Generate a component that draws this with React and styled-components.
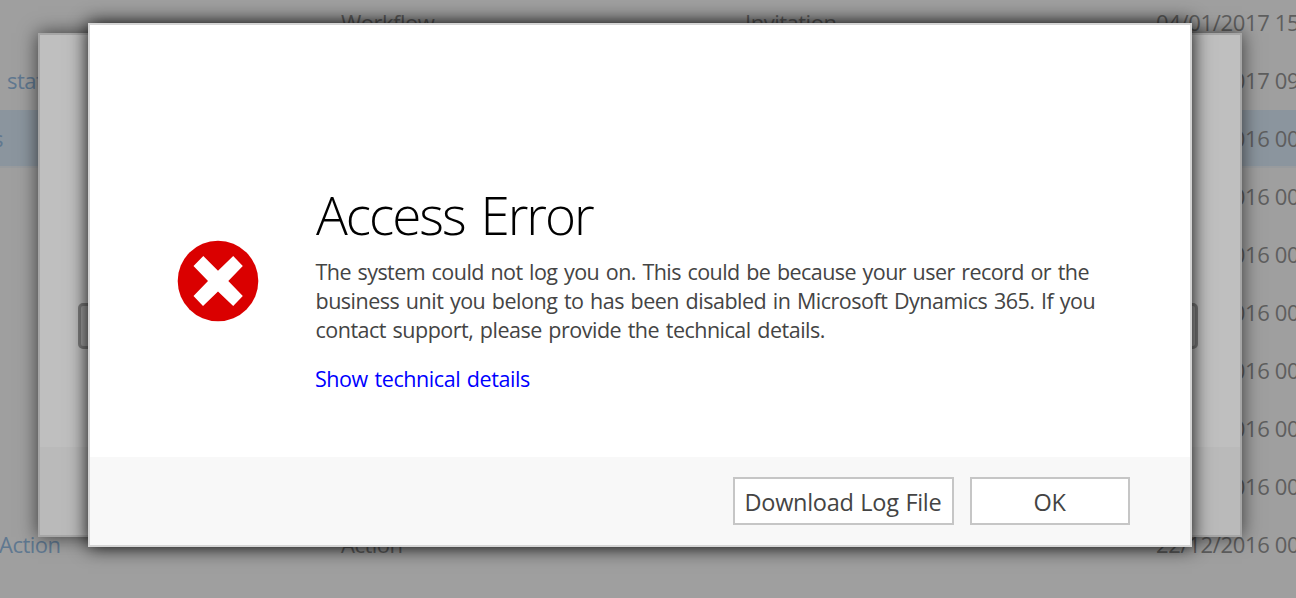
import React from "react";
import styled, { createGlobalStyle } from "styled-components";

const GlobalStyle = createGlobalStyle`
  * { box-sizing: border-box; }
  html, body { margin: 0; padding: 0; }
  body {
    font-family: "Open Sans", "Noto Sans", sans-serif;
    overflow: hidden;
    background: #9f9f9f;
  }
`;

const Screen = styled.main`
  position: relative;
  width: 1296px;
  height: 598px;
  overflow: hidden;
  background: #9f9f9f;
`;

const Table = styled.div`
  display: flex;
  flex-direction: column;
  margin-top: -6px;
`;

const Row = styled.div`
  display: grid;
  grid-template-columns: 341px 404px 411px 1fr;
  align-items: center;
  flex: none;
  height: 58px;
  padding-bottom: 1px;
  border-bottom: 2px solid ${(p) => (p.$selected ? "#989b9e" : "#9f9f9f")};
  background: ${(p) => (p.$selected ? "#8b959e" : "transparent")};
`;

const Cell = styled.span`
  color: #5e5e5e;
  font-size: 22px;
  line-height: 30px;
  letter-spacing: ${(p) => p.$tracking || "-0.5px"};
  white-space: nowrap;
`;

const NameCell = styled(Cell)`
  color: #607890;
  padding-left: ${(p) => p.$indent || 0}px;
  margin-left: ${(p) => p.$shift || 0}px;
`;

const Layer = styled.div`
  position: absolute;
  inset: 0;
  display: flex;
  align-items: flex-start;
  padding: ${(p) => p.$top}px 0 0 ${(p) => p.$left}px;
`;

const Window = styled.section`
  display: flex;
  flex-direction: column;
  flex: none;
  width: ${(p) => p.$width}px;
  height: ${(p) => p.$height}px;
  border: 2px solid ${(p) => (p.$dimmed ? "#a6a6a6" : "#d5d5d5")};
  background: ${(p) => (p.$dimmed ? "#bfbfbf" : "#ffffff")};
  box-shadow: 0 0 ${(p) => (p.$dimmed ? "18px rgba(0, 0, 0, 0.65)" : "18px rgba(0, 0, 0, 0.95)")};
`;

const DimmedBody = styled.div`
  flex: 1;
  padding: 268px 42px 0 38px;
`;

const DimmedField = styled.div`
  height: 46px;
  border: 3px solid #7c7c7c;
  border-radius: 5px;
  background: #a2a2a2;
`;

const Footer = styled.footer`
  display: flex;
  justify-content: flex-end;
  gap: 16px;
  flex: none;
  height: 88px;
  padding: 20px 60px 0 0;
  background: ${(p) => (p.$dimmed ? "#bababa" : "#f8f8f8")};
`;

const Body = styled.div`
  display: flex;
  flex: 1;
  align-items: flex-start;
`;

const ErrorIcon = styled.svg`
  flex: none;
  width: 82px;
  height: 82px;
  margin: 215px 56px 0 87px;
`;

const Message = styled.div`
  padding-top: 155px;
`;

const Title = styled.h1`
  margin: 0 0 0 1px;
  color: #000;
  font-size: 53px;
  font-weight: 300;
  line-height: 70px;
  letter-spacing: -2px;
  word-spacing: 4px;
  white-space: nowrap;
`;

const Paragraph = styled.p`
  margin: 7px 0 20px;
  color: #444;
  font-size: 21.5px;
  line-height: 29px;
  word-spacing: 1.5px;
`;

const Line = styled.span`
  display: block;
  padding-left: 0.5px;
  white-space: nowrap;
  letter-spacing: ${(p) => p.$tracking};
`;

const DetailsLink = styled.a`
  display: block;
  color: #0000ff;
  font-size: 21.5px;
  line-height: 29px;
  letter-spacing: -0.43px;
  word-spacing: 1.5px;
  text-decoration: none;
`;

const Button = styled.button`
  width: ${(p) => p.$width}px;
  height: 48px;
  padding: 1px 1px 0 0;
  border: 2px solid #c6c6c6;
  background: #fff;
  color: #444;
  font-family: inherit;
  font-size: 23.5px;
  line-height: 34px;
  letter-spacing: -0.3px;
  word-spacing: 1px;
  white-space: nowrap;
`;

const rows = [
  { type: "Workflow", related: "Invitation", date: "04/01/2017 15" },
  { name: "stat", indent: 7, date: "04/01/2017 09" },
  { name: "s", shift: -7, date: "22/12/2016 00", selected: true },
  { date: "22/12/2016 00" },
  { date: "22/12/2016 00" },
  { date: "22/12/2016 00" },
  { date: "22/12/2016 00" },
  { date: "22/12/2016 00" },
  { date: "22/12/2016 00" },
  { name: "Action", shift: -1, type: "Action", date: "22/12/2016 00" },
];

export default function App() {
  return (
    <Screen>
      <GlobalStyle />
      <Table>
        {rows.map((r, i) => (
          <Row key={i} $selected={r.selected}>
            <NameCell $indent={r.indent} $shift={r.shift}>{r.name}</NameCell>
            <Cell>{r.type}</Cell>
            <Cell>{r.related}</Cell>
            <Cell $tracking="-0.33px">{r.date}</Cell>
          </Row>
        ))}
      </Table>

      <Layer $top={33} $left={38}>
        <Window $dimmed $width={1204} $height={504}>
          <DimmedBody>
            <DimmedField />
          </DimmedBody>
          <Footer $dimmed />
        </Window>
      </Layer>

      <Layer $top={23} $left={88}>
        <Window role="dialog" $width={1104} $height={524}>
          <Body>
            <ErrorIcon viewBox="0 0 82 82" aria-hidden="true">
              <circle cx="41" cy="41" r="40.3" fill="#da0000" />
              <path
                d="M16.5 26 26.3 16 41 30.8 56.2 16 65.8 26 51.3 41 65.8 56 56.2 66 41 51.4 26 66 16.5 56 31 41Z"
                fill="#fff"
              />
            </ErrorIcon>
            <Message>
              <Title>Access Error</Title>
              <Paragraph>
                <Line $tracking="-0.55px">The system could not log you on. This could be because your user record or the</Line>
                <Line $tracking="-0.5px">business unit you belong to has been disabled in Microsoft Dynamics 365. If you</Line>
                <Line $tracking="-0.5px">contact support, please provide the technical details.</Line>
              </Paragraph>
              <DetailsLink>Show technical details</DetailsLink>
            </Message>
          </Body>
          <Footer>
            <Button $width={221}>Download Log File</Button>
            <Button $width={160}>OK</Button>
          </Footer>
        </Window>
      </Layer>
    </Screen>
  );
}
